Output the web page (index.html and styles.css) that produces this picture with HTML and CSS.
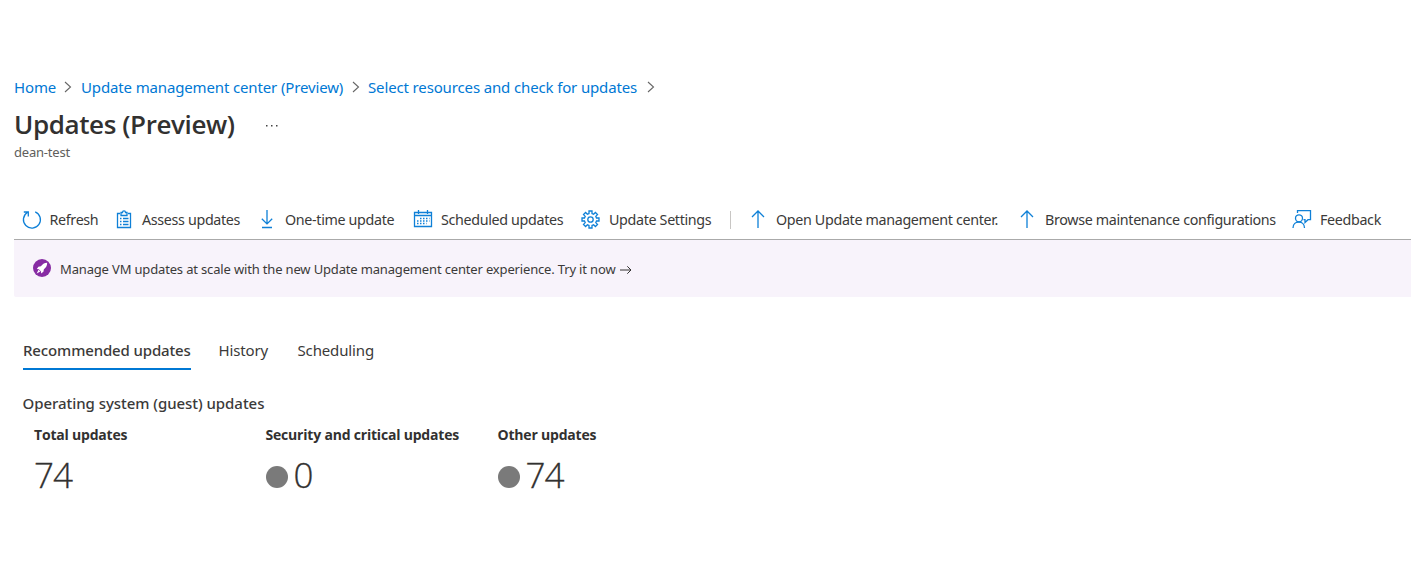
FILE: index.html
```html
<!DOCTYPE html>
<html lang="en">
<head>
<meta charset="utf-8">
<title>Updates (Preview)</title>
<link rel="stylesheet" href="styles.css">
</head>
<body>
<nav class="breadcrumb">
  <a>Home</a><svg class="chev" viewBox="0 0 8 14"><path d="M1 2l5.500 5L1 12"/></svg>
  <a>Update management center (Preview)</a><svg class="chev" viewBox="0 0 8 14"><path d="M1 2l5.500 5L1 12"/></svg>
  <a>Select resources and check for updates</a><svg class="chev" viewBox="0 0 8 14"><path d="M1 2l5.500 5L1 12"/></svg>
</nav>
<header class="heading">
  <h1>Updates (Preview)</h1>
  <svg class="more" viewBox="0 0 14 4"><path d="M1 1h1.500v1.500H1zM6 1h1.500v1.500H6zM11 1h1.500v1.500H11z"/></svg>
</header>
<p class="subtitle">dean-test</p>
<div class="toolbar">
  <svg class="icon" viewBox="0 0 20 20"><path d="M13.200 1.800A8.500 8.500 0 1 1 5.300 2.500M1.800 2h4.500v4.500"/></svg><span>Refresh</span>
  <svg class="icon" viewBox="0 0 20 20"><path d="M5 3.500H2.500v14h13v-14H13M6 2.500h1.500C7.500.4 10.500.4 10.500 2.500H12v3H6zM5 8.500h1.500M8 8.500h5.500M5 11.500h1.500M8 11.500h5.500M5 14.500h1.500M8 14.500h5.500"/></svg><span>Assess updates</span>
  <svg class="icon" viewBox="0 0 20 20"><path d="M8 0v14M2.800 8.700L8 13.900l5.200-5.200M3 17.500h10"/></svg><span>One-time update</span>
  <svg class="icon" viewBox="0 0 20 20"><path d="M1.500 2.500h17v14h-17zM1.500 5.500h17M5.500 0v4M14.500 0v4"/><path class="dots" d="M7 8.500h9.500M4 11h12.500M4 13.500h9.500"/></svg><span>Scheduled updates</span>
  <svg class="icon" viewBox="0 0 20 20"><path d="M8 1h3v2.500l1.600.7 1.800-1.700 2.100 2.100-1.700 1.800.7 1.600H18v3h-2.500l-.7 1.600 1.700 1.800-2.100 2.100-1.800-1.700-1.600.7V18H8v-2.500l-1.600-.7-1.800 1.700-2.100-2.100 1.700-1.800-.7-1.600H1V8h2.500l.7-1.600-1.700-1.800 2.100-2.100 1.800 1.700L8 3.500z"/><circle cx="9.500" cy="9.500" r="2.700"/></svg><span>Update Settings</span>
  <i class="divider"></i>
  <svg class="icon" viewBox="0 0 20 20"><path d="M8 18V1M2 7l6-6 6 6"/></svg><span>Open Update management center.</span>
  <svg class="icon" viewBox="0 0 20 20"><path d="M8 18V1M2 7l6-6 6 6"/></svg><span>Browse maintenance configurations</span>
  <svg class="icon" viewBox="0 0 20 20"><circle cx="7" cy="8.300" r="3.500"/><path d="M1 18c0-8 11.500-8 11.500 0M5.500 3V.700h13v9H16l-3 2.800V9.700h-1.500"/></svg><span>Feedback</span>
</div>
<section class="banner">
  <svg class="rocket" viewBox="0 0 18 18"><circle cx="9" cy="9" r="9"/><path d="M14.200 3.700c-3.200.2-4.800 1.600-6.300 3.500l-2.500.5-1.600 2.400 2 .1 2.200 2.200.1 2 2.300-1.700.5-2.500c1.900-1.500 3.200-3.200 3.300-6.500zM5.500 10.800l-1.800 3.600 3.600-1.800z"/></svg>
  <span>Manage VM updates at scale with the new Update management center experience. Try it now</span>
  <svg class="arrow" viewBox="0 0 12 10"><path d="M0 5h11M7.300 1.300L11 5 7.300 8.700"/></svg>
</section>
<div class="tabs"><span class="tab active">Recommended updates</span><span class="tab">History</span><span class="tab">Scheduling</span></div>
<h2>Operating system (guest) updates</h2>
<div class="stats">
  <div><h3>Total updates</h3><div class="value">74</div></div>
  <div><h3>Security and critical updates</h3><div class="value"><i class="dot"></i>0</div></div>
  <div><h3>Other updates</h3><div class="value"><i class="dot"></i>74</div></div>
</div>
</body>
</html>
```
FILE: styles.css
```css
* { box-sizing: border-box; }
body { margin: 0; padding: 75px 0 0 14px; height: 576px; overflow: hidden; background: #fff; color: #323130; font-family: "Noto Sans", "Open Sans", sans-serif; white-space: nowrap; }
svg { fill: none; stroke: #0f80d7; stroke-width: 1.3; }
h1, h2, h3, p { margin: 0; }
.breadcrumb { display: grid; grid-template-columns: 50px 17px 271px 16px 279px 16px; align-items: center; height: 24px; font-size: 15px; letter-spacing: -0.14px; color: #0078d4; }
.chev { width: 8px; height: 14px; stroke: #666; stroke-width: 1.1; }
.heading { display: flex; align-items: center; height: 49px; gap: 30px; }
h1 { width: 221px; font-family: "Open Sans", sans-serif; font-size: 26px; font-weight: 600; line-height: 48px; letter-spacing: -0.4px; }
.more { width: 14px; height: 4px; margin-top: 4px; fill: #444; stroke: none; }
.subtitle { height: 46px; font-size: 13px; line-height: 9px; color: #605e5c; letter-spacing: -.2px; }
.toolbar { display: grid; grid-template-columns: 27.5px 65px 27.5px 117px 26px 128px 28px 140px 28px 121px 20px 26px 243px 26px 247px 28px 70px; align-items: center; height: 46px; padding-left: 8px; border-bottom: 1px solid #aaa; font-size: 14.3px; letter-spacing: -.34px; padding-top: 6px; color: #3b3a39; }
.icon { width: 20px; height: 20px; }
.dots { stroke-dasharray: 1.5 1.5; }
.divider { width: 1px; height: 18px; background: #c8c6c4; }
.banner { display: flex; align-items: center; height: 57px; padding-left: 19px; background: #f8f3fb; border-radius: 0 0 0 2px; font-size: 13px; letter-spacing: -.16px; color: #3b3a39; }
.rocket { width: 18px; height: 18px; fill: #872ba3; stroke: none; margin: -2px 9px 0 0; }
.rocket path { fill: #fff; }
.arrow { width: 12px; height: 10px; stroke: #323130; stroke-width: 1; margin-left: 5px; margin-top: 3px; }
.tabs { display: grid; grid-template-columns: 195.500px 79px 100px; height: 38px; margin: 35px 0 0 9px; font-size: 15px; letter-spacing: -.14px; line-height: 37px; color: #3b3a39; }
.active { width: 168px; height: 38px; border-bottom: 2px solid #0078d4; font-weight: 500; }
h2 { height: 51px; margin-left: 8.5px; font-size: 15px; font-weight: 500; line-height: 66px; letter-spacing: -.05px; color: #3b3a39; }
.stats { display: grid; grid-template-columns: 231.5px 232px 200px; margin-left: 20px; }
h3 { height: 28px; font-family: "Open Sans", sans-serif; font-size: 14px; line-height: 28px; font-weight: 700; letter-spacing: -.2px; }
.value { display: flex; align-items: center; height: 50px; font-family: "Open Sans", sans-serif; font-size: 35px; font-weight: 300; letter-spacing: -1px; -webkit-text-stroke: .3px #323130; }
.dot { width: 22px; height: 22px; margin: 5px 6px 0 0; border-radius: 50%; background: #7a7a7a; }
```
